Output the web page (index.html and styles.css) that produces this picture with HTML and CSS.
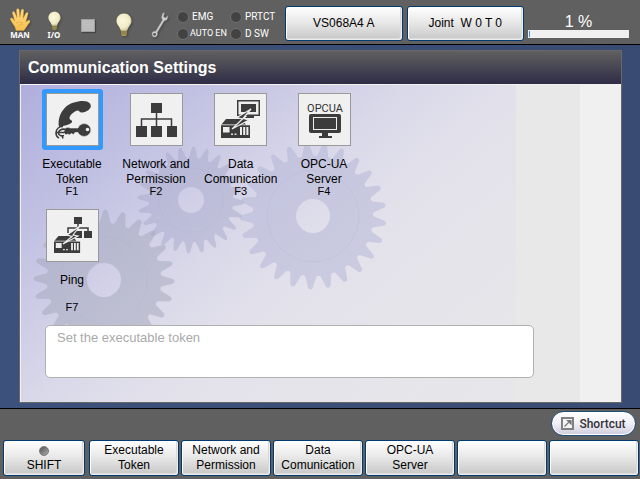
FILE: index.html
```html
<!DOCTYPE html>
<html lang="en">
<head>
<meta charset="utf-8">
<meta name="viewport" content="width=device-width, initial-scale=1">
<title>Communication Settings</title>
<link rel="stylesheet" href="styles.css">
</head>
<body>
<svg class="defs" aria-hidden="true">
  <defs>
    <radialGradient id="glow" cx=".4" cy=".4" r=".7"><stop offset="0" stop-color="#fbf8dc"/><stop offset=".65" stop-color="#f1ebc4"/><stop offset="1" stop-color="#b5b18c"/></radialGradient>
    <linearGradient id="skin" x2="0" y2="1"><stop offset="0" stop-color="#ffdc85"/><stop offset="1" stop-color="#f8bf4c"/></linearGradient>
    <symbol id="bulb" viewBox="0 0 16 24">
      <path d="M5 17h6v4q0 2-3 2t-3-2z" fill="#b3a45a"/><path d="M5 19h6M5 21h6" stroke="#625b38" stroke-width=".8"/>
      <path d="M8 .5C3.600.5.5 3.800.5 7.900c0 4 3.500 5.500 4.200 9.600h6.600c.7-4.100 4.200-5.600 4.200-9.600C15.500 3.800 12.400.5 8 .5z" fill="url(#glow)"/>
    </symbol>
    <symbol id="plc" viewBox="0 0 30 20">
      <path d="M0 7 5 1h16l4 6h4v13H0z" fill="#3c3c3c"/>
      <path d="M0 6.800h29" stroke="#eee" stroke-width=".8"/>
      <path d="M2 9h6.500v5.500H2zM19 9h2v8h-2zM22.200 9h2v8h-2zM25.400 9h2v8h-2z" fill="#eee"/>
      <path d="M10 15.500h2V17h-2zM13.500 15.500h2V17h-2z" fill="#ddd"/>
    </symbol>
  </defs>
</svg>
<header class="topbar">
  <div class="modes">
    <div class="mode mode-man">
      <svg viewBox="0 0 20 23" width="20" height="23" aria-hidden="true"><path d="M6 22.500C5.500 19 3.600 17 2.200 14.800L.4 11.400c-.5-1.400 1.300-2.100 2.200-.9l2.100 2.600L2.500 5.200C2.200 3.400 4.300 3 4.900 4.700L7 9.800 6.500 2.200C6.500.3 9 .2 9.200 2l.7 7.500 1.300-7.200c.4-1.800 2.700-1.400 2.500.5l-.6 7.600 2.700-5.200c.8-1.500 2.700-.8 2.200.9l-2.200 7.800 2.400-1.500c1.400-.8 2.700.7 1.600 1.800-2.200 2.300-3.500 5.400-5.800 8.300z" fill="url(#skin)" stroke="#dfa13a" stroke-width=".4"/><path d="M6 15q3-2 7 0M8 19q1-3 5-3" fill="none" stroke="#e2a840" stroke-width=".6"/></svg>
      <span>MAN</span>
    </div>
    <div class="mode mode-io"><svg width="13" height="20" aria-hidden="true"><use href="#bulb"/></svg><span>I/O</span></div>
    <div class="mode mode-stop"><i class="stop"></i></div>
    <div class="mode mode-lamp"><svg width="16" height="24" aria-hidden="true"><use href="#bulb"/></svg></div>
    <div class="mode mode-tool"><svg viewBox="0 0 18 26" width="18" height="26" aria-hidden="true"><path d="M13.500.6 11.600 1.500 10.500 5 11.400 8.200 4.600 19.400C2.500 18.800.8 20.200 1 22.200l.3 1.600C2 25.200 4 25.500 5.300 24.400c1.200-1 1.400-2.500.9-3.800L13.100 9.100 16 7.700 17.200 3.500 14.400 5.900 12.500 4.800z" fill="#d0d0d0" stroke="#999" stroke-width=".5"/><circle cx="3.600" cy="22.300" r="1.400" fill="#555"/></svg></div>
  </div>
  <ul class="signals">
    <li>EMG</li><li>PRTCT</li><li class="tight">AUTO EN</li><li>D SW</li>
  </ul>
  <button class="key top-key" type="button">VS068A4 A</button>
  <button class="key top-key" type="button">Joint&nbsp; W 0 T 0</button>
  <div class="speed">
    <label for="speed">1 %</label>
    <progress id="speed" max="100" value="1"></progress>
  </div>
</header>

<main class="desk">
  <section class="panel">
    <h1>Communication Settings</h1>
    <div class="panel-body">
      <div class="backdrop" aria-hidden="true">
        <svg id="gears" viewBox="0 0 495 317" width="495" height="317"></svg>
      </div>
      <div class="tiles">
        <button class="tile selected" type="button">
          <span class="tile-icon"><svg viewBox="0 0 51 51" width="51" height="51" aria-hidden="true">
            <path d="M12 33C10 22 17 11 27 8.500 31 7 37 6.500 40 7.500c4 1.500 5 5 2.500 7.500-2 2-5 3.500-7.500 3.500-2.500.3-2.500-2-4.500-2-4 1-8 5-8 7.500 0 2.500 3 1.500 2.500 4C24.500 30 17 32 12 33z" fill="#3c3c3c"/>
            <path d="M18 34.500c2-1.500 4-1.500 5-.5h8c1.500-4 6-5.500 9.500-3.500 4.500 2.500 4.500 8.500 0 11-3.500 2-8 .5-9.500-3h-3l-1.500 2-2.500-1-1.500 1.500-2-1-1.500 1-2.500-2.500z" fill="#3c3c3c" stroke="#eee" stroke-width=".6"/>
            <circle cx="40.500" cy="35.500" r="1.800" fill="#eee"/>
            <path d="M16 32.500c-4 0-7 2.500-7 6.500 0 2 1 4 3 5M19 35.500c-4-1-7.500.5-7.500 3.500 0 2 2.500 3.500 5.500 2.500M17 38.500h-8M15 41.500l1 3" fill="none" stroke="#3c3c3c" stroke-width="1.600"/></svg></span>
          <span class="tile-name">Executable<br>Token</span><span class="tile-key">F1</span>
        </button>
        <button class="tile" type="button">
          <span class="tile-icon"><svg viewBox="0 0 51 51" width="51" height="51" aria-hidden="true"><path d="M20 9h11v10H20zM5 32h11v11H5zM20 32h11v11H20zM36 32h10v11H36z" fill="#3c3c3c"/><path d="M25.500 18v16M10.500 34v-9h30v9" fill="none" stroke="#3c3c3c" stroke-width="1.500"/></svg></span>
          <span class="tile-name">Network and<br>Permission</span><span class="tile-key">F2</span>
        </button>
        <button class="tile" type="button">
          <span class="tile-icon"><svg viewBox="0 0 51 51" width="51" height="51" aria-hidden="true"><path d="M22 6h23v16H22z" fill="#3c3c3c"/><path d="M23.500 7.500h20v13h-20z" fill="#eee"/><path d="M26 10h15v8H26zM32 22h7v2H30z" fill="#3c3c3c"/><use href="#plc" x="6" y="24" width="30" height="20"/><path d="m36 15-14 8.500 5.500 1.500L17 35l17-9-6-1.500z" fill="#3c3c3c" stroke="#eee" stroke-width="1.200"/></svg></span>
          <span class="tile-name">Data<br>Comunication</span><span class="tile-key">F3</span>
        </button>
        <button class="tile" type="button">
          <span class="tile-icon"><svg viewBox="0 0 51 51" width="51" height="51" aria-hidden="true"><text x="26" y="18" text-anchor="middle" class="opc">OPCUA</text><rect x="10" y="20" width="32" height="19" rx="2" fill="#3c3c3c"/><rect x="14.500" y="23.500" width="23" height="12" fill="#3c3c3c" stroke="#eee"/><path d="M23 39h6v3h4v2H20v-2h3z" fill="#3c3c3c"/></svg></span>
          <span class="tile-name">OPC-UA<br>Server</span><span class="tile-key">F4</span>
        </button>
        <button class="tile row-start" type="button">
          <span class="tile-icon"><svg viewBox="0 0 51 51" width="51" height="51" aria-hidden="true"><path d="M27 7h8v7h-8zM37 21h8v7h-8zM27 21h8v7h-8z" fill="#3c3c3c"/><path d="M31 13v5M21 23v-5h20v4" fill="none" stroke="#3c3c3c" stroke-width="1.500"/><use href="#plc" x="7" y="25" width="27" height="18"/><path d="m33 16-13 9 5 1.500L16 34l15-8-5-1z" fill="#3c3c3c" stroke="#eee" stroke-width="1.200"/></svg></span>
          <span class="tile-name">Ping</span><span class="tile-key">F7</span>
        </button>
      </div>
      <p class="hint">Set the executable token</p>
    </div>
  </section>
</main>

<footer class="bottom">
  <button class="shortcut" type="button"><svg viewBox="0 0 13 13" width="13" height="13" aria-hidden="true"><rect x="1" y="1" width="11" height="11" fill="#f5f5f7" stroke="#808080" stroke-width="2"/><path d="M3.500 9.500 8 5M6.500 3.500H10V7z" stroke="#777" stroke-width="1.200" fill="#777"/></svg>Shortcut</button>
  <nav class="keys">
    <button class="key shift" type="button"><i class="led"></i>SHIFT</button>
    <button class="key" type="button">Executable<br>Token</button>
    <button class="key" type="button">Network and<br>Permission</button>
    <button class="key" type="button">Data<br>Comunication</button>
    <button class="key" type="button">OPC-UA<br>Server</button>
    <button class="key" type="button" aria-label="Unassigned"></button>
    <button class="key" type="button" aria-label="Unassigned"></button>
  </nav>
</footer>
<script src="gears.js"></script>
</body>
</html>
```
FILE: styles.css
```css
* { box-sizing: border-box; }
body {
  margin: 0;
  min-height: 100vh;
  display: flex;
  flex-direction: column;
  background: #3a4c75;
  font: 12px/15px "Liberation Sans", Arial, sans-serif;
  color: #000;
}
button { font: inherit; color: inherit; padding: 0; }
.defs { position: absolute; width: 0; height: 0; }

.topbar {
  display: flex;
  align-items: flex-start;
  height: 45px;
  padding: 6px 11px 0 3px;
  background: #606060;
  border-bottom: 1px solid #000;
}
.modes { display: flex; width: 174px; }
.mode {
  width: 34px;
  height: 33px;
  display: flex;
  flex-direction: column;
  align-items: center;
  justify-content: flex-end;
  color: #fff;
  font: bold 8px/8px "Noto Sans", sans-serif;
}
.mode svg { filter: drop-shadow(1px 1px 1px #444); }
.mode-stop { padding-bottom: 7px; }
.mode-lamp { width: 38px; padding-bottom: 2px; }
.mode-tool { padding-bottom: 1px; }
.stop { width: 14px; height: 13px; background: #bcbcbc; border: 1px solid #a0a0a0; box-shadow: 1px 1px 1px #444; }

.signals {
  list-style: none;
  margin: 2px 0 0;
  padding: 0;
  width: 108px;
  display: grid;
  grid-template-columns: 53px 1fr;
  grid-auto-rows: 17px;
  color: #fff;
  font: 10px/17px Roboto, sans-serif;
}
.signals li { display: flex; align-items: center; gap: 3px; white-space: nowrap; }
.signals .tight { gap: 1px; font-size: 9px; }
.signals li::before {
  content: "";
  flex: none;
  width: 10px;
  height: 10px;
  border-radius: 50%;
  background: #424242;
  border: 1px solid #707070;
}

.key {
  flex: 1;
  height: 36px;
  border: 1px solid #003a70;
  border-radius: 3px;
  background: linear-gradient(#fff, #e6e6e6 50%, #c6c6c6);
  box-shadow: inset 1px 1px 0 #fff, inset -1px -1px 0 #ececec, inset -2px -2px 0 #dadada;
}
.top-key { height: 35px; flex: 1 1 117px; margin-right: 4px; }
.speed { width: 101px; color: #fff; font-size: 16px; line-height: 17px; text-align: center; padding-top: 7px; }
.speed label { display: block; }
.speed progress {
  display: block;
  width: 100%;
  height: 8px;
  appearance: none;
  border: 1px solid #f0f0f0;
  background: #f0f0f0;
}
.speed progress::-webkit-progress-bar { background: #f0f0f0; }
.speed progress::-webkit-progress-value { background: #3e8ddd; }

.desk { flex: 1; display: flex; padding: 5px 18px 5px 19px; background: linear-gradient(90deg, #3c517b, #3a4b73); }
.panel {
  flex: 1;
  display: flex;
  flex-direction: column;
  border: 1px solid #686868;
}
.panel h1 {
  margin: 0;
  padding: 0 8px;
  background: linear-gradient(#606060, #2e2c46);
  color: #fff;
  font-size: 16px;
  line-height: 33px;
}
.panel-body {
  flex: 1;
  position: relative;
  padding: 8px 0 24px 15px;
  background: #f0f0f0;
  border: solid #f4f2ee;
  border-width: 1px 0 0 1px;
}
.backdrop {
  position: absolute;
  inset: 0 41px 0 0;
  padding-right: 64px;
  overflow: hidden;
  background: linear-gradient(140deg, #b0aedd 0%, #c2c2e3 22%, #d9d8e9 44%, #e3e2eb 60%, #e7e7ea 100%) 0 0 / calc(100% - 64px) 100% no-repeat #e8e8e8;
}
.backdrop svg { display: block; }

.tiles {
  position: relative;
  display: grid;
  grid-template-columns: repeat(4, 72px);
  column-gap: 12px;
  row-gap: 8px;
}
.tile {
  display: grid;
  grid-template-rows: 64px 27px 17px;
  justify-items: center;
  border: 0;
  background: none;
  white-space: nowrap;
}
.row-start { grid-column: 1; }
.tile-icon { width: 53px; height: 53px; border: 1px solid #999; background: #f0f0f0; }
.tile-icon svg { display: block; }
.selected .tile-icon { box-shadow: 0 0 0 4px #3399ff; border-radius: 1px; }
.tile-name { line-height: 15px; }
.tile-key { font-size: 11px; line-height: 15px; }
.opc { font: 11px Roboto, sans-serif; fill: #333; }

.hint {
  position: relative;
  width: 489px;
  max-width: 100%;
  height: 53px;
  margin: 8px 0 0 9px;
  padding: 4px 11px;
  border: 1px solid #b0b0b0;
  border-radius: 5px;
  background: #fff;
  color: #aaa;
  font-size: 13px;
  line-height: 15px;
}

.bottom {
  display: flex;
  flex-direction: column;
  gap: 4px;
  padding: 2px 1px 3px 3px;
  background: #606060;
  border-top: 1px solid #000;
}
.shortcut {
  align-self: flex-end;
  display: flex;
  align-items: center;
  justify-content: center;
  gap: 5px;
  width: 85px;
  height: 25px;
  margin-right: 3px;
  border: 1px solid #1f4e79;
  border-radius: 13px;
  background: linear-gradient(#fff, #f0eff8 50%, #cfccdb);
  box-shadow: inset 0 0 0 1px #fff;
  color: #333;
  font: 500 12px/20px Roboto, sans-serif;
}
.keys { display: flex; gap: 2px; }
.shift {
  flex: 0 0 82px;
  margin-right: 2px;
  display: flex;
  flex-direction: column;
  align-items: center;
  justify-content: flex-end;
  gap: 2px;
  padding-bottom: 2px;
}
.led { width: 10px; height: 10px; border-radius: 50%; background: linear-gradient(135deg, #555, #aaa); border: 1px solid #777; }
```
FILE: gears.js
```js
// Draws the three faint cogwheels behind the settings tiles.
const gears = [
  { x: 170, y: 115, root: 43, tip: 54, hole: 13, teeth: 24, turn: 0.05, fill: "#a9abcc" },
  { x: 292, y: 131, root: 61, tip: 74, hole: 17, teeth: 25, turn: 0.1, fill: "#b2b4d6" },
  { x: 83, y: 195, root: 58, tip: 71, hole: 17, teeth: 24, turn: 0.02, fill: "#a4a8bc" }
];

function gearPath(g) {
  const step = (Math.PI * 2) / g.teeth;
  const at = (r, a) => (g.x + r * Math.cos(a)).toFixed(1) + " " + (g.y + r * Math.sin(a)).toFixed(1);
  let d = "";
  for (let i = 0; i < g.teeth; i++) {
    const a = g.turn + i * step;
    d += (i ? "L" : "M") + at(g.root, a - step * 0.36);
    d += "L" + at(g.tip - 2, a - step * 0.13);
    d += "Q" + at(g.tip + 1, a) + " " + at(g.tip - 2, a + step * 0.13);
    d += "L" + at(g.root, a + step * 0.36);
    d += "Q" + at(g.root - 2, a + step * 0.5) + " " + at(g.root, a + step * 0.64);
  }
  const h = g.hole;
  return d + `ZM${g.x - h} ${g.y}a${h} ${h} 0 1 0 ${2 * h} 0a${h} ${h} 0 1 0 ${-2 * h} 0Z`;
}

document.getElementById("gears").innerHTML = gears.map(g =>
  `<g opacity=".5"><path d="${gearPath(g)}" fill="${g.fill}" fill-rule="evenodd"/>` +
  `<circle cx="${g.x}" cy="${g.y}" r="${g.root * 0.75}" fill="none" stroke="#9295b8" stroke-opacity=".35"/></g>`
).join("");
```
